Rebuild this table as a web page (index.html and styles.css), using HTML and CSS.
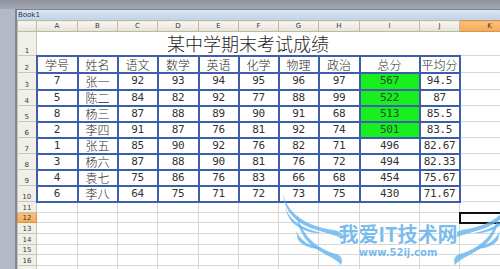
FILE: index.html
```html
<!DOCTYPE html>
<html lang="zh-CN">
<head>
<meta charset="utf-8">
<title>Book1</title>
<link rel="stylesheet" href="styles.css">
</head>
<body>
<div class="desk">
  <div class="win">
    <div class="title">Book1</div>
    <table class="sheet">
      <colgroup>
        <col class="w-rh"><col class="w41"><col class="w40"><col class="w40"><col class="w41"><col class="w40"><col class="w40"><col class="w40"><col class="w41"><col class="w60"><col class="w40"><col class="w60">
      </colgroup>
      <tr class="h-col">
        <th class="corner"></th><th>A</th><th>B</th><th>C</th><th>D</th><th>E</th><th>F</th><th>G</th><th>H</th><th>I</th><th>J</th><th class="hl">K</th>
      </tr>
      <tr class="h-r1">
        <th class="rh">1</th><td class="heading" colspan="10">某中学期末考试成绩</td><td class="g"></td>
      </tr>
      <tr class="h-r2">
        <th class="rh">2</th><td class="b zh">学号</td><td class="b zh">姓名</td><td class="b zh">语文</td><td class="b zh">数学</td><td class="b zh">英语</td><td class="b zh">化学</td><td class="b zh">物理</td><td class="b zh">政治</td><td class="b zh">总分</td><td class="b zh">平均分</td><td class="g"></td>
      </tr>
      <tr class="h-r3">
        <th class="rh">3</th><td class="b n">7</td><td class="b zh">张一</td><td class="b n">92</td><td class="b n">93</td><td class="b n">94</td><td class="b n">95</td><td class="b n">96</td><td class="b n">97</td><td class="b n top">567</td><td class="b n">94.5</td><td class="g"></td>
      </tr>
      <tr class="h-r">
        <th class="rh">4</th><td class="b n">5</td><td class="b zh">陈二</td><td class="b n">84</td><td class="b n">82</td><td class="b n">92</td><td class="b n">77</td><td class="b n">88</td><td class="b n">99</td><td class="b n top">522</td><td class="b n">87</td><td class="g"></td>
      </tr>
      <tr class="h-r">
        <th class="rh">5</th><td class="b n">8</td><td class="b zh">杨三</td><td class="b n">87</td><td class="b n">88</td><td class="b n">89</td><td class="b n">90</td><td class="b n">91</td><td class="b n">68</td><td class="b n top">513</td><td class="b n">85.5</td><td class="g"></td>
      </tr>
      <tr class="h-r">
        <th class="rh">6</th><td class="b n">2</td><td class="b zh">李四</td><td class="b n">91</td><td class="b n">87</td><td class="b n">76</td><td class="b n">81</td><td class="b n">92</td><td class="b n">74</td><td class="b n top">501</td><td class="b n">83.5</td><td class="g"></td>
      </tr>
      <tr class="h-r">
        <th class="rh">7</th><td class="b n">1</td><td class="b zh">张五</td><td class="b n">85</td><td class="b n">90</td><td class="b n">92</td><td class="b n">76</td><td class="b n">82</td><td class="b n">71</td><td class="b n">496</td><td class="b n">82.67</td><td class="g"></td>
      </tr>
      <tr class="h-r">
        <th class="rh">8</th><td class="b n">3</td><td class="b zh">杨六</td><td class="b n">87</td><td class="b n">88</td><td class="b n">90</td><td class="b n">81</td><td class="b n">76</td><td class="b n">72</td><td class="b n">494</td><td class="b n">82.33</td><td class="g"></td>
      </tr>
      <tr class="h-r">
        <th class="rh">9</th><td class="b n">4</td><td class="b zh">袁七</td><td class="b n">75</td><td class="b n">86</td><td class="b n">76</td><td class="b n">83</td><td class="b n">66</td><td class="b n">68</td><td class="b n">454</td><td class="b n">75.67</td><td class="g"></td>
      </tr>
      <tr class="h-r">
        <th class="rh">10</th><td class="b n">6</td><td class="b zh">李八</td><td class="b n">64</td><td class="b n">75</td><td class="b n">71</td><td class="b n">72</td><td class="b n">73</td><td class="b n">75</td><td class="b n">430</td><td class="b n">71.67</td><td class="g"></td>
      </tr>
      <tr class="h-s11">
        <th class="rh">11</th><td class="g"></td><td class="g"></td><td class="g"></td><td class="g"></td><td class="g"></td><td class="g"></td><td class="g"></td><td class="g"></td><td class="g"></td><td class="g"></td><td class="g"></td>
      </tr>
      <tr class="h-s10">
        <th class="rh hl">12</th><td class="g"></td><td class="g"></td><td class="g"></td><td class="g"></td><td class="g"></td><td class="g"></td><td class="g"></td><td class="g"></td><td class="g"></td><td class="g"></td><td class="sel"></td>
      </tr>
      <tr class="h-s11">
        <th class="rh">13</th><td class="g"></td><td class="g"></td><td class="g"></td><td class="g"></td><td class="g"></td><td class="g"></td><td class="g"></td><td class="g"></td><td class="g"></td><td class="g"></td><td class="g"></td>
      </tr>
      <tr class="h-s11">
        <th class="rh">14</th><td class="g"></td><td class="g"></td><td class="g"></td><td class="g"></td><td class="g"></td><td class="g"></td><td class="g"></td><td class="g"></td><td class="g"></td><td class="g"></td><td class="g"></td>
      </tr>
      <tr class="h-s10">
        <th class="rh">15</th><td class="g"></td><td class="g"></td><td class="g"></td><td class="g"></td><td class="g"></td><td class="g"></td><td class="g"></td><td class="g"></td><td class="g"></td><td class="g"></td><td class="g"></td>
      </tr>
      <tr class="h-s11">
        <th class="rh">16</th><td class="g"></td><td class="g"></td><td class="g"></td><td class="g"></td><td class="g"></td><td class="g"></td><td class="g"></td><td class="g"></td><td class="g"></td><td class="g"></td><td class="g"></td>
      </tr>
      <tr class="h-s11">
        <th class="rh"></th><td class="g"></td><td class="g"></td><td class="g"></td><td class="g"></td><td class="g"></td><td class="g"></td><td class="g"></td><td class="g"></td><td class="g"></td><td class="g"></td><td class="g"></td>
      </tr>
    </table>
  </div>

  <div class="wm">
    <svg class="wings" width="500" height="269" viewBox="0 0 500 269">
      <g class="wing">
        <path d="M283,194 C288,214 306,226 334,230 C342,232 345,236 344,240 C336,234 318,232 304,225 C291,218 284,207 283,194 Z"/>
        <path d="M285,207 C290,220 300,228 322,233 C312,234 300,230 292,222 C288,217 286,212 285,207 Z"/>
        <path d="M297,213 C300,232 314,248 336,254 C342,256 343,260 341,265 C336,258 322,254 312,246 C302,237 297,226 297,213 Z"/>
        <path d="M296,231 C302,242 310,246 322,248 C312,250 303,246 298,240 Z"/>
      </g>
      <g class="wing" transform="translate(796,0) scale(-1,1)">
        <path d="M283,194 C288,214 306,226 334,230 C342,232 345,236 344,240 C336,234 318,232 304,225 C291,218 284,207 283,194 Z"/>
        <path d="M285,207 C290,220 300,228 322,233 C312,234 300,230 292,222 C288,217 286,212 285,207 Z"/>
        <path d="M297,213 C300,232 314,248 336,254 C342,256 343,260 341,265 C336,258 322,254 312,246 C302,237 297,226 297,213 Z"/>
        <path d="M296,231 C302,242 310,246 322,248 C312,250 303,246 298,240 Z"/>
      </g>
    </svg>
    <div class="wm-text">
      <div class="wm-name">我爱IT技术网</div>
      <div class="wm-url">www.52ij.com</div>
    </div>
  </div>
</div>
</body>
</html>
```

FILE: styles.css
```css
html, body {
  margin: 0;
  padding: 0;
  width: 500px;
  height: 269px;
  overflow: hidden;
  background: #b3b9c6;
}

.desk {
  position: relative;
  width: 500px;
  height: 269px;
  box-sizing: border-box;
  padding: 9px 0 0 15px;
  background: linear-gradient(to bottom, #8d929c 0px, #a2a7b2 9px, #b3b9c6 9px, #b3b9c6 100%);
  overflow: hidden;
}

.win {
  height: 100%;
  border-left: 2px solid #7f8697;
  border-top: 1px solid #7c8394;
  background: #ffffff;
  overflow: hidden;
}

.title {
  height: 10px;
  line-height: 10px;
  padding-left: 1px;
  font-family: "DejaVu Sans", sans-serif;
  font-size: 7px;
  color: #263352;
  background: linear-gradient(to bottom, #dbe5f3, #c2d2e8);
}

.sheet {
  border-collapse: collapse;
  table-layout: fixed;
  width: 502px;
}

.w-rh { width: 19px; }
.w40 { width: 40px; }
.w41 { width: 41px; }
.w60 { width: 60px; }

.sheet th, .sheet td {
  padding: 0;
  overflow: hidden;
  white-space: nowrap;
}

.h-col { height: 11px; }
.h-r1 { height: 24px; }
.h-r2 { height: 17px; }
.h-r3 { height: 17px; }
.h-r { height: 16px; }
.h-s11 { height: 11px; }
.h-s10 { height: 10px; }

.h-col th {
  font-family: "DejaVu Sans", sans-serif;
  font-weight: normal;
  font-size: 7px;
  line-height: 8px;
  color: #3b3b3b;
  text-align: center;
  vertical-align: middle;
  border: 1px solid #bdbaa8;
  background: linear-gradient(to bottom, #f8f7f1, #e5e3d7);
}

.h-col th.hl {
  background: linear-gradient(to bottom, #fbc27f, #f6a955);
  border-color: #d49550;
}

.rh {
  font-family: "DejaVu Sans", sans-serif;
  font-weight: normal;
  font-size: 7px;
  line-height: 8px;
  color: #3b3b3b;
  text-align: center;
  vertical-align: bottom;
  border: 1px solid #c9c6b4;
  background: #f1f0e8;
}

.rh.hl {
  background: linear-gradient(to bottom, #fbc27f, #f6a955);
  border-color: #d49550;
}

.g {
  border: 1px solid #d7d7d7;
}

.heading {
  font-family: "Noto Sans CJK SC", sans-serif;
  font-weight: 300;
  font-size: 18px;
  line-height: 22px;
  color: #1e1e1e;
  text-align: center;
  vertical-align: middle;
  border: 1px solid #ffffff;
  overflow: visible;
}

.b {
  border: 2px solid #3d5eaa;
  text-align: center;
  vertical-align: middle;
  color: #2a2a2a;
}

.zh {
  font-family: "Noto Sans CJK SC", sans-serif;
  font-weight: 300;
  font-size: 12px;
  line-height: 13px;
}

.n {
  font-family: "DejaVu Sans Mono", monospace;
  font-size: 11px;
  line-height: 12px;
  letter-spacing: -0.3px;
  color: #333333;
}

.top {
  background: #19ee1e;
  color: #244a32;
}

.sel {
  border: 2px solid #111111;
}

.wm {
  position: absolute;
  left: 0;
  top: 0;
  width: 500px;
  height: 269px;
  pointer-events: none;
}

.wings {
  position: absolute;
  left: 0;
  top: 0;
}

.wing path {
  fill: rgba(100, 180, 238, 0.8);
}

.wm-text {
  position: absolute;
  left: 328px;
  top: 224px;
  width: 140px;
  display: flex;
  flex-direction: column;
  align-items: center;
  gap: 4px;
}

.wm-name {
  font-family: "Noto Sans CJK SC", sans-serif;
  font-weight: 700;
  font-size: 20px;
  line-height: 20px;
  letter-spacing: 0;
  color: rgba(98, 176, 234, 0.85);
  text-shadow: 0 0 1px #ffffff, 1px 1px 0 rgba(255, 255, 255, 0.8);
}

.wm-url {
  font-family: "DejaVu Sans", sans-serif;
  font-weight: 700;
  font-size: 10px;
  line-height: 10px;
  color: rgba(98, 176, 234, 0.85);
}
```
